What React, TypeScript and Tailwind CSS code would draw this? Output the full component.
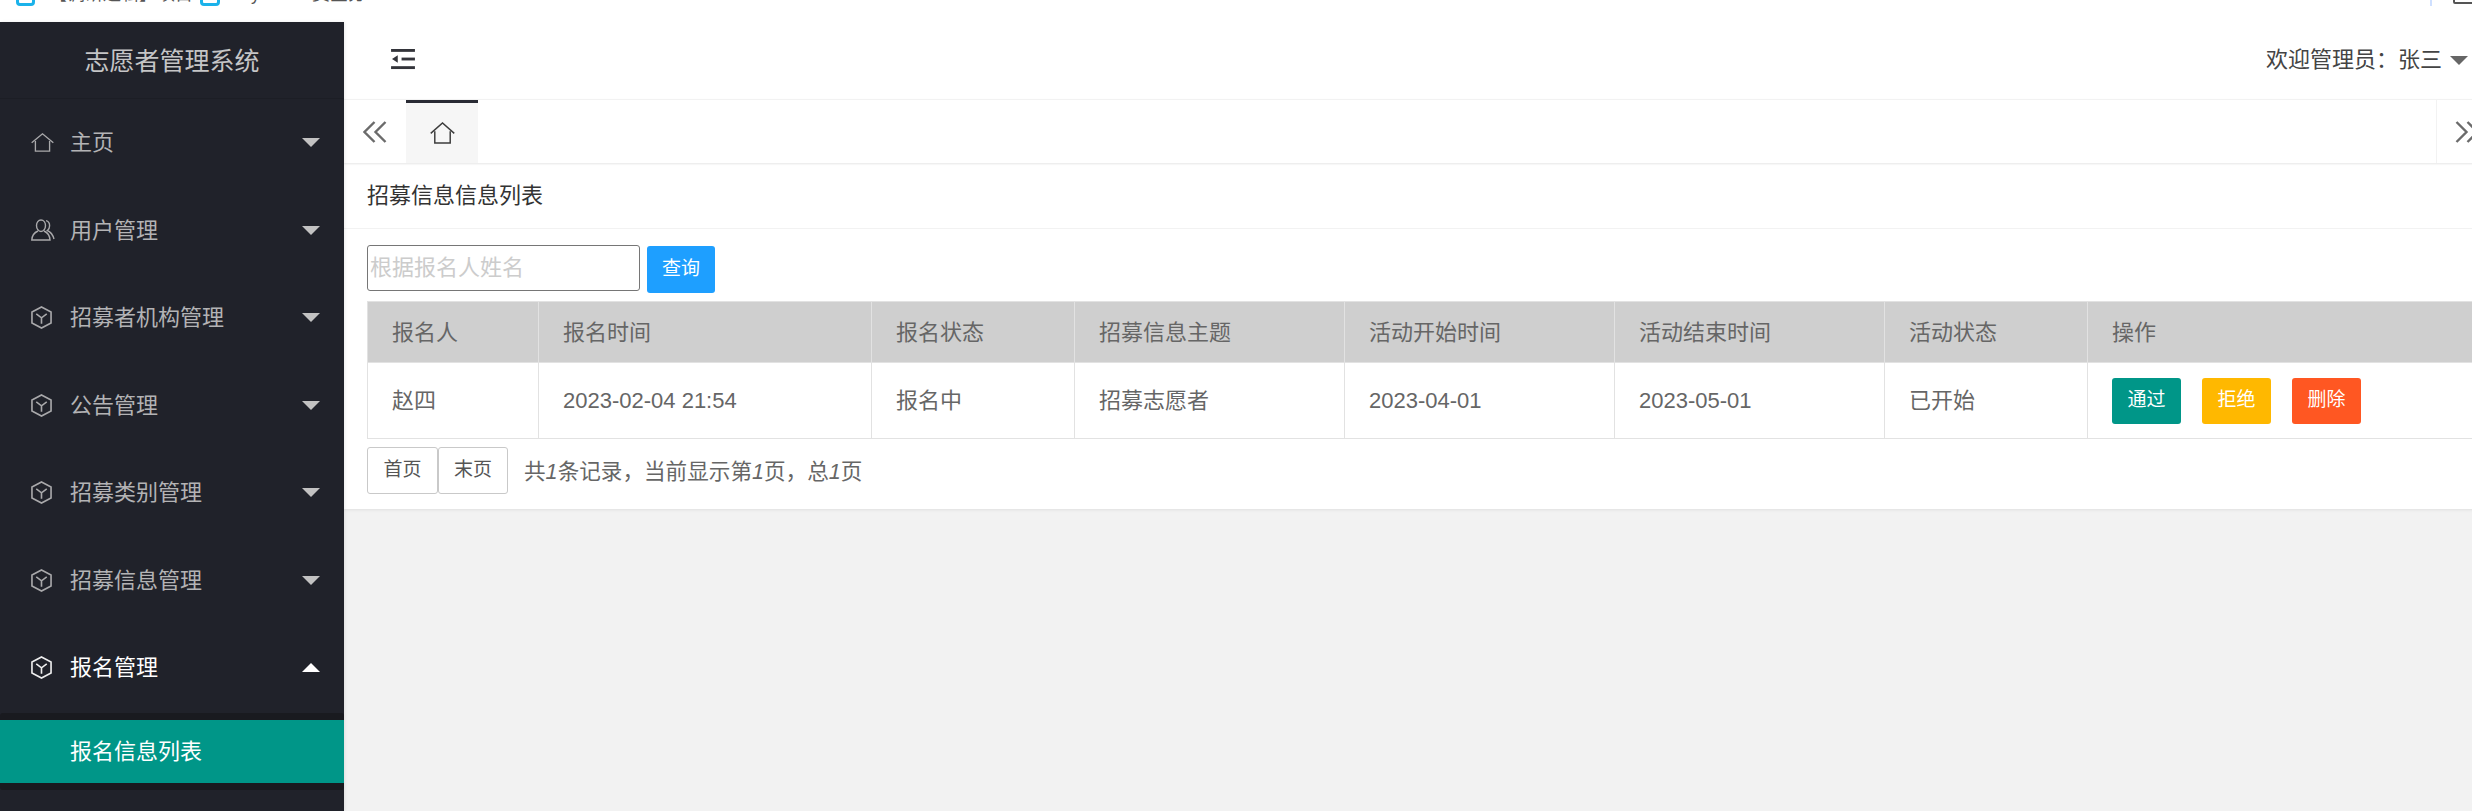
import React from "react";

const HomeIcon = ({ color = "#a9a9ab", w = 23, h = 19 }: { color?: string; w?: number; h?: number }) => (
  <svg width={w} height={h} viewBox="0 0 24 20" preserveAspectRatio="none" fill="none" stroke={color} strokeWidth="1.4">
    <path d="M0.7 10.300 12 0.900 23.300 10.300" />
    <path d="M4.600 8.500V19H19.400V8.500" />
  </svg>
);

const UserIcon = () => (
  <svg width="24" height="22" viewBox="0 0 24 22" fill="none" stroke="#a9a9ab" strokeWidth="1.4">
    <path d="M5.500 6.500C5.500 3.400 7.400 1 10 1s4.500 2.400 4.500 5.500S12.600 12.500 10 12.500 5.500 9.600 5.500 6.500Z" />
    <path d="M7 12C3.500 13.500 1 16.500 .8 21H19C18.800 16.500 16.500 13.500 13 12" />
    <path d="M15 1.600C17 2 18.600 4 18.600 6.800c0 2-.9 3.700-2.200 4.700 3 1.300 5.400 4.200 6.600 8.500" />
  </svg>
);

const CubeIcon = ({ color = "#a9a9ab" }: { color?: string }) => (
  <svg width="21" height="23" viewBox="0 0 22 24" fill="none" stroke={color} strokeWidth="1.7">
    <path d="M11 1 21 6.300V17.700L11 23 1 17.700V6.300Z" />
    <path d="M5.500 8.300 11 12.300 16.500 8.300M11 12.300V18.500" />
  </svg>
);

const Chevrons = ({ right = false }: { right?: boolean }) => (
  <svg width="24" height="22" viewBox="0 0 24 22" fill="none" stroke="#6b6b6b" strokeWidth="2.400" className={right ? "rotate-180" : ""}>
    <path d="M11.500 1 1.500 11l10 10" />
    <path d="M22.500 1 12.500 11l10 10" />
  </svg>
);

const Caret = ({ up = false }: { up?: boolean }) =>
  up ? (
    <span className="w-0 h-0 border-x-[9px] border-x-transparent border-b-[9px] border-b-white" />
  ) : (
    <span className="w-0 h-0 border-x-[9px] border-x-transparent border-t-[9px] border-t-[#c2c2c2]" />
  );

const menus = [
  { label: "主页", icon: <HomeIcon /> },
  { label: "用户管理", icon: <UserIcon /> },
  { label: "招募者机构管理", icon: <CubeIcon /> },
  { label: "公告管理", icon: <CubeIcon /> },
  { label: "招募类别管理", icon: <CubeIcon /> },
  { label: "招募信息管理", icon: <CubeIcon /> },
];

const columns = [
  { title: "报名人", value: "赵四", w: "w-[171px]" },
  { title: "报名时间", value: "2023-02-04 21:54", w: "w-[333px]" },
  { title: "报名状态", value: "报名中", w: "w-[203px]" },
  { title: "招募信息主题", value: "招募志愿者", w: "w-[270px]" },
  { title: "活动开始时间", value: "2023-04-01", w: "w-[270px]" },
  { title: "活动结束时间", value: "2023-05-01", w: "w-[270px]" },
  { title: "活动状态", value: "已开始", w: "w-[203px]" },
];

const Sidebar = () => (
  <aside className="w-[344px] shrink-0 bg-[#20222a] shadow-[1px_0_3px_rgba(0,0,0,0.08)] z-10">
    <div className="h-[77px] flex items-center justify-center text-[25px] text-[#c5c5c6] border-b border-b-[#1c1e25]">
      <span className="mt-[3px]">志愿者管理系统</span>
    </div>
    {menus.map((m) => (
      <div key={m.label} className="h-[87.5px] flex items-center pl-[31px] pr-[24px] text-[22px] text-[#b3b3b5]">
        <span className="w-[39px] flex items-center">{m.icon}</span>
        <span className="flex-1">{m.label}</span>
        <Caret />
      </div>
    ))}
    <div className="h-[87.5px] flex items-center pl-[31px] pr-[24px] text-[22px] text-white">
      <span className="w-[39px] flex items-center"><CubeIcon color="#eeeeee" /></span>
      <span className="flex-1">报名管理</span>
      <Caret up />
    </div>
    <div className="mt-[1px] py-[7px] bg-[#191a1f] rounded-[3px]">
      <div className="h-[63px] bg-[#009688] flex items-center pl-[70px] text-[22px] text-white">报名信息列表</div>
    </div>
  </aside>
);

const Header = () => (
  <header className="h-[77px] bg-white flex items-center justify-between pl-[47px] pr-[28px]">
    <svg width="24" height="21" viewBox="0 0 25 22" className="mt-[-2px]" fill="#33343a">
      <rect x="0" y="0" width="25" height="3" />
      <rect x="11" y="9" width="14" height="3" />
      <rect x="0" y="18" width="25" height="3" />
      <path d="M1 10.500 7 6.500V14.500Z" />
    </svg>
    <div className="flex items-center text-[22px] text-[#444] mt-[-2px]">
      <span>欢迎管理员：张三</span>
      <span className="ml-[8px] mt-[1px] w-0 h-0 border-x-[9px] border-x-transparent border-t-[9px] border-t-[#666]" />
    </div>
  </header>
);

const TabBar = () => (
  <div className="h-[64px] bg-white flex border-t border-t-[#f2f2f2] shadow-[0_1px_2px_rgba(0,0,0,0.1)] relative">
    <div className="w-[62px] flex items-center justify-center"><Chevrons /></div>
    <div className="w-[72px] bg-[#f6f6f6] border-t-[3px] border-t-[#292b34] flex items-center justify-center">
      <HomeIcon color="#3c3c3c" w={25} h={22} />
    </div>
    <div className="flex-1" />
    <div className="w-[60px] border-l border-l-[#f2f2f2] flex items-center justify-center"><Chevrons right /></div>
  </div>
);

const Table = () => (
  <table className="table-fixed w-[2107px] border-collapse text-[22px] text-[#666]">
    <thead>
      <tr className="h-[61px] bg-[#cfcfcf]">
        {columns.map((c) => (
          <th key={c.title} className={`${c.w} font-normal text-left pl-[24px] border border-[#e2e2e2]`}>{c.title}</th>
        ))}
        <th className="font-normal text-left pl-[24px] border border-[#e2e2e2]">操作</th>
      </tr>
    </thead>
    <tbody>
      <tr className="h-[76px]">
        {columns.map((c) => (
          <td key={c.title} className="pl-[24px] border-b border-x border-[#e2e2e2]">{c.value}</td>
        ))}
        <td className="pl-[24px] border-b border-x border-[#e2e2e2]">
          <div className="flex gap-[21px] text-[19px] text-white">
            <button className="w-[69px] h-[46px] rounded-[3px] bg-[#009688]">通过</button>
            <button className="w-[69px] h-[46px] rounded-[3px] bg-[#ffb800]">拒绝</button>
            <button className="w-[69px] h-[46px] rounded-[3px] bg-[#ff5722]">删除</button>
          </div>
        </td>
      </tr>
    </tbody>
  </table>
);

const Card = () => (
  <section className="bg-white shadow-[0_1px_3px_rgba(0,0,0,0.08)] h-[346px]">
    <div className="h-[66px] flex items-center pl-[23px] text-[22px] text-[#333] border-b border-b-[#f2f2f2]">招募信息信息列表</div>
    <div className="pl-[23px]">
      <div className="flex items-start pt-[16px] h-[72px]">
        <input
          placeholder="根据报名人姓名"
          className="w-[273px] h-[46px] border border-[#767676] rounded-[3px] px-[2px] text-[22px] placeholder:text-[#cccccc] outline-none"
        />
        <button className="ml-[7px] mt-[1px] w-[68px] h-[47px] rounded-[3px] bg-[#1e9fff] text-[19px] text-white">查询</button>
      </div>
      <Table />
      <div className="flex items-center mt-[8px]">
        <button className="w-[71px] h-[47px] border border-[#c9c9c9] rounded-[3px] bg-white text-[19px] text-[#555]">首页</button>
        <button className="w-[70px] h-[47px] border border-[#c9c9c9] rounded-[3px] bg-white text-[19px] text-[#555]">末页</button>
        <span className="ml-[16px] mt-[4px] text-[21.6px] text-[#666]">共<i>1</i>条记录，当前显示第<i>1</i>页，总<i>1</i>页</span>
      </div>
    </div>
  </section>
);

const BookmarkBar = () => (
  <div className="h-[22px] bg-white relative overflow-hidden text-[18px] text-[#555] whitespace-nowrap">
    <div className="flex items-end h-[6px] pl-[16px]">
      <span className="w-[19px] h-[16px] border-[3px] border-[#1bb2ea] rounded-[4px] shrink-0" />
      <span className="ml-[14px] w-[140px] leading-[24px] h-[24px] shrink-0">【调研逻辑】项目...</span>
      <span className="ml-[11px] w-[20px] h-[16px] border-[3px] border-[#1bb2ea] rounded-[4px] shrink-0" />
      <span className="ml-[8px] leading-[24px] h-[24px] shrink-0">Day02-09-费全分...</span>
    </div>
    <span className="absolute left-[2430px] top-0 w-[2px] h-[6px] bg-[#cfe0ff]" />
    <span className="absolute left-[2453px] -top-[10px] w-[24px] h-[14px] border-2 border-[#555] rounded-[2px]" />
  </div>
);

export default function App() {
  return (
    <div className="w-[2472px] h-[811px] overflow-hidden flex flex-col bg-white font-['Liberation_Sans','Noto_Sans_CJK_SC',sans-serif]">
      <BookmarkBar />
      <div className="flex flex-1 min-h-0">
        <Sidebar />
        <main className="w-[2152px] shrink-0 bg-[#f2f2f2]">
          <Header />
          <TabBar />
          <Card />
        </main>
      </div>
    </div>
  );
}
